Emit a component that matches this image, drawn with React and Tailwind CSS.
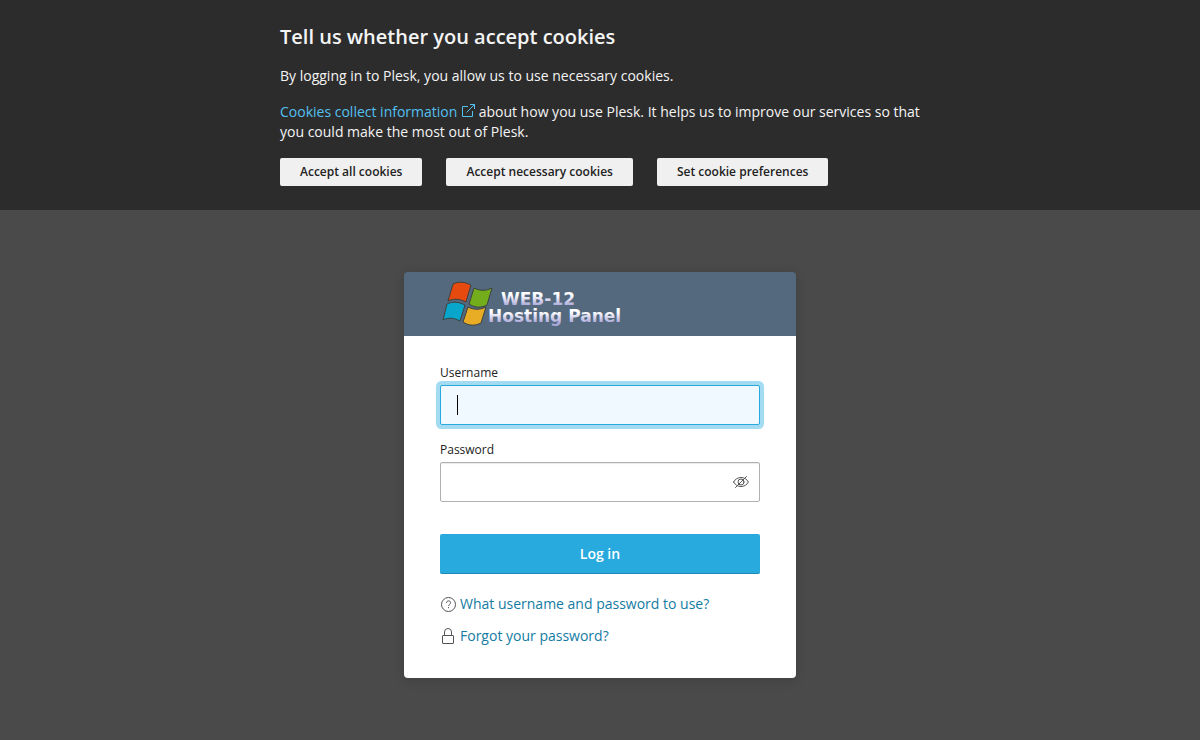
import { useState } from 'react'

const COOKIE_ACTIONS = ['Accept all cookies', 'Accept necessary cookies', 'Set cookie preferences']

function ExternalIcon() {
  return (
    <svg viewBox="0 0 14 14" className="inline-block h-3.5 w-3.5 align-[-1px]" fill="none" stroke="currentColor" aria-hidden="true">
      <path d="M7 2.5H1.5v10h10V7M9 .5h4.500v4.500M13.500.5 5.500 8.500" />
    </svg>
  )
}

function EyeOffIcon() {
  return (
    <svg viewBox="0 0 16 16" className="h-4 w-4" fill="none" stroke="currentColor" strokeLinecap="round" aria-hidden="true">
      <path d="M.6 8C2.200 5.100 4.800 3.500 8 3.500s5.800 1.600 7.400 4.500c-1.600 2.900-4.200 4.500-7.400 4.500S2.200 10.900.6 8Z" />
      <circle cx="8" cy="8" r="3" />
      <path d="M2.500 13.500 13.500 2.500" />
    </svg>
  )
}

function HelpIcon() {
  return (
    <svg viewBox="0 0 16 16" className="h-4 w-4 shrink-0 text-[#555]" fill="none" stroke="currentColor" aria-hidden="true">
      <circle cx="8.500" cy="8.500" r="7" />
      <path d="M6.500 7c0-1.300.9-2.100 2.100-2.100s2 .8 2 1.900c0 1.500-2 1.600-2 3.200M8.600 11v1.200" />
    </svg>
  )
}

function LockIcon() {
  return (
    <svg viewBox="0 0 16 16" className="h-4 w-4 shrink-0 text-[#555]" fill="none" stroke="currentColor" aria-hidden="true">
      <rect x="2.500" y="7.500" width="11" height="8" rx=".5" />
      <path d="M4.500 7.500V4a3.500 3.500 0 0 1 7 0v3.500" />
    </svg>
  )
}

function Logo() {
  return (
    <svg viewBox="0 0 200 64" className="h-16 w-[200px]" role="img" aria-label="WEB-12 Hosting Panel">
      <defs>
        <linearGradient id="chrome" x1="0" y1="0" x2="0" y2="1">
          <stop offset=".3" stopColor="#ffffff" />
          <stop offset=".85" stopColor="#a9a5d8" />
        </linearGradient>
      </defs>
      <g stroke="#3b4140" strokeWidth="1" strokeLinejoin="round">
        <path fill="#e64a0e" d="M13 12c6-3 12-2 18 1l-5 17c-6-3-12-4-18-1Z" />
        <path fill="#74ad1b" d="M34 16c6 3 12 3 18 0l-5 17c-6 3-12 3-18-1Z" />
        <path fill="#08a6ca" d="M7 32c6-3 12-2 18 1l-5 16c-6-3-11-4-17-1Z" />
        <path fill="#e8ad25" d="M28 35c6 3 12 3 18 0l-5 16c-6 3-12 3-18-1Z" />
      </g>
      <g fill="url(#chrome)" fontFamily="DejaVu Sans, sans-serif" fontWeight="700" fontSize="17">
        <text x="61" y="33">WEB-12</text>
        <text x="48" y="50">Hosting Panel</text>
      </g>
    </svg>
  )
}

function CookieBanner() {
  return (
    <section className="bg-[#2c2c2c] px-6 py-6 text-sm text-[#f4f4f4]">
      <div className="mx-auto max-w-[640px]">
        <h2 className="mb-4 text-xl leading-[26px] font-semibold">Tell us whether you accept cookies</h2>
        <p className="mb-4">By logging in to Plesk, you allow us to use necessary cookies.</p>
        <p className="mb-4">
          <a href="#cookies" className="text-[#53c0f0] hover:underline">
            Cookies collect information <ExternalIcon />
          </a>{' '}
          about how you use Plesk. It helps us to improve our services so that you could make the most out of Plesk.
        </p>
        <div className="flex flex-wrap gap-6">
          {COOKIE_ACTIONS.map((label) => (
            <button key={label} type="button" className="h-7 rounded-xs bg-[#f0f0f0] px-5 text-xs font-semibold text-[#222] hover:bg-white">
              {label}
            </button>
          ))}
        </div>
      </div>
    </section>
  )
}

function LoginForm() {
  const [showPassword, setShowPassword] = useState(false)

  return (
    <form className="bg-white px-9 pt-7 pb-8" onSubmit={(e) => e.preventDefault()}>
      <label htmlFor="username" className="mb-1 block text-xs leading-[17px]">Username</label>
      <div className="relative mb-4">
        <input
          id="username"
          type="text"
          placeholder=" "
          autoFocus
          className="peer block h-10 w-full rounded-xs border border-[#b0b0b0] px-4 text-sm outline-none placeholder-shown:caret-transparent focus:border-[#28aade] focus:bg-[#f0f9ff] focus:ring-4 focus:ring-[#a3dcf2]"
        />
        {/* steady caret while the field is empty */}
        <span className="pointer-events-none absolute inset-y-0 left-4 my-2.5 hidden border-r border-black pl-px peer-[:focus:placeholder-shown]:block" />
      </div>
      <label htmlFor="password" className="mb-1 block text-xs leading-[17px]">Password</label>
      <div className="mb-8 flex h-10 items-center rounded-xs border border-[#b0b0b0] pr-2.5 shadow-[inset_0_1px_1px_#e8e8e8]">
        <input id="password" type={showPassword ? 'text' : 'password'} className="h-full min-w-0 flex-1 bg-transparent px-4 text-sm outline-none" />
        <button type="button" aria-label="Show password" className="text-[#555]" onClick={() => setShowPassword(!showPassword)}>
          <EyeOffIcon />
        </button>
      </div>
      <button type="submit" className="mb-5 h-10 w-full rounded-xs border-b border-[#1f8ab5] bg-[#28aade] text-sm font-semibold text-white">
        Log in
      </button>
      <div className="flex flex-col items-start gap-3 text-sm text-[#137ba3]">
        <a href="#help" className="flex items-center gap-1 hover:underline">
          <HelpIcon />
          What username and password to use?
        </a>
        <a href="#restore" className="flex items-center gap-1 hover:underline">
          <LockIcon />
          Forgot your password?
        </a>
      </div>
    </form>
  )
}

export default function App() {
  return (
    <div className="flex min-h-screen flex-col bg-[#4a4a4a] font-['Open_Sans',sans-serif] text-[#222]">
      <CookieBanner />
      <main className="flex flex-1 items-center justify-center">
        <div className="w-full max-w-[392px] overflow-hidden rounded-sm shadow-[0_2px_12px_rgba(0,0,0,0.15)]">
          <div className="bg-[#54697d] px-9">
            <Logo />
          </div>
          <LoginForm />
        </div>
      </main>
    </div>
  )
}
